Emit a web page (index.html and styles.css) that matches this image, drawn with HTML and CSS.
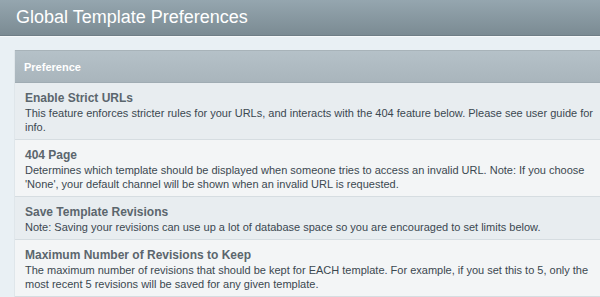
FILE: index.html
```html
<!DOCTYPE html>
<html>
<head>
<meta charset="utf-8">
<link rel="stylesheet" href="styles.css">
</head>
<body>
<div class="page">
  <div class="page-head">
    <h1 class="page-title">Global Template Preferences</h1>
  </div>
  <div class="content">
    <div class="table">
      <div class="table-head">Preference</div>
      <div class="row row-odd">
        <div class="row-title">Enable Strict URLs</div>
        <div class="row-desc">This feature enforces stricter rules for your URLs, and interacts with the 404 feature below. Please see user guide for info.</div>
      </div>
      <div class="row row-even">
        <div class="row-title">404 Page</div>
        <div class="row-desc">Determines which template should be displayed when someone tries to access an invalid URL. Note: If you choose 'None', your default channel will be shown when an invalid URL is requested.</div>
      </div>
      <div class="row row-odd">
        <div class="row-title">Save Template Revisions</div>
        <div class="row-desc">Note: Saving your revisions can use up a lot of database space so you are encouraged to set limits below.</div>
      </div>
      <div class="row row-even">
        <div class="row-title">Maximum Number of Revisions to Keep</div>
        <div class="row-desc">The maximum number of revisions that should be kept for EACH template. For example, if you set this to 5, only the most recent 5 revisions will be saved for any given template.</div>
      </div>
    </div>
  </div>
</div>
</body>
</html>
```
FILE: styles.css
```css
html, body {
  margin: 0;
  padding: 0;
}
body {
  font-family: "Liberation Sans", Arial, sans-serif;
  background: #edf2f5;
  overflow: hidden;
}
.page {
  width: 600px;
  height: 297px;
  overflow: hidden;
}
.page-head {
  height: 35px;
  background: linear-gradient(#95a6af, #7b8b93);
  border-bottom: 1px solid #6f7e86;
  display: flex;
  align-items: center;
  padding-left: 16px;
}
.page-title {
  margin: 0;
  font-size: 18px;
  font-weight: normal;
  color: #ffffff;
}
.content {
  border-top: 1px solid #f6f9fa;
  background: #e9f0f4;
  padding: 13px 0 0 14px;
}
.table {
  width: 620px;
  border-left: 1px solid #dfe6ea;
}
.table-head {
  height: 33px;
  background: linear-gradient(#b5c1c8, #a9b5bc);
  border-top: 1px solid #a8b3b9;
  border-bottom: 1px solid #a0acb3;
  box-sizing: border-box;
  display: flex;
  align-items: center;
  padding-left: 9px;
  color: #ffffff;
  font-size: 11px;
  font-weight: bold;
}
.row {
  padding: 8px 30px 5px 10px;
  border-bottom: 1px solid #d6dde1;
}
.row-odd {
  background: #e8edf0;
}
.row-even {
  background: #f3f5f6;
}
.row-title {
  font-size: 12px;
  font-weight: bold;
  color: #5b666d;
  line-height: 15px;
}
.row-desc {
  font-size: 11px;
  color: #3b4850;
  line-height: 14px;
}
```
